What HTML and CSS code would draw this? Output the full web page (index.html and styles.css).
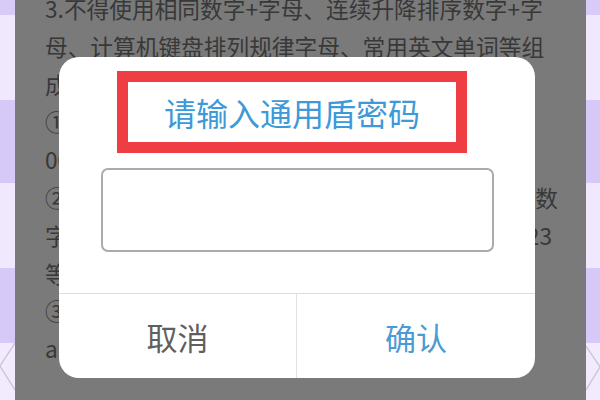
FILE: index.html
```html
<!DOCTYPE html>
<html lang="zh-CN">
<head>
<meta charset="utf-8">
<title>请输入通用盾密码</title>
<link rel="stylesheet" href="styles.css">
</head>
<body>
<div class="screen">
  <div class="stripe stripe-left">
    <svg class="deco" width="15" height="400" viewBox="0 0 15 400"><path d="M15 343 L0 366 L15 390" fill="none" stroke="#c9c1d9" stroke-width="1.3"/></svg>
  </div>
  <div class="main">
    <div class="article">
      <div class="line">3.不得使用相同数字+字母、连续升降排序数字+字</div>
      <div class="line">母、计算机键盘排列规律字母、常用英文单词等组</div>
      <div class="line">成的简单密码：</div>
      <div class="line">①相同数字：</div>
      <div class="line">000000</div>
      <div class="line split"><span>②连续数：</span><span>数</span></div>
      <div class="line split split-23"><span>字：1</span><span>23</span></div>
      <div class="line">等；</div>
      <div class="line">③常用：</div>
      <div class="line">asd</div>
    </div>
    <div class="dialog">
      <div class="dialog-title">请输入通用盾密码</div>
      <div class="dialog-input"></div>
      <div class="dialog-actions">
        <div class="btn btn-cancel">取消</div>
        <div class="btn btn-ok">确认</div>
      </div>
    </div>
  </div>
  <div class="stripe stripe-right">
    <svg class="deco" width="14" height="400" viewBox="0 0 14 400"><path d="M0 346 L14 367 L0 390" fill="none" stroke="#c9c1d9" stroke-width="1.3"/></svg>
  </div>
</div>
</body>
</html>
```
FILE: styles.css
```css
html, body {
  margin: 0;
  padding: 0;
}
body {
  width: 600px;
  height: 400px;
  overflow: hidden;
  font-family: "Noto Sans CJK SC", "Noto Sans", sans-serif;
}
.screen {
  display: grid;
  grid-template-columns: 15px 571px 14px;
  height: 400px;
}
.stripe {
  background: linear-gradient(to bottom,
    #d8cbf8 0, #d8cbf8 15px,
    #f0e9fd 15px, #f0e9fd 100px,
    #d6c8f7 100px, #d6c8f7 183px,
    #f0e9fd 183px, #f0e9fd 268px,
    #d6c8f7 268px, #d6c8f7 343px,
    #f1ebfd 343px, #f1ebfd 400px);
}
.deco {
  display: block;
}
.main {
  position: relative;
  background: #7a7a7a;
  overflow: hidden;
}
.article {
  margin-top: -10px;
  padding-left: 30px;
  width: 513px;
  color: #383838;
  font-size: 22.7px;
  line-height: 37.8px;
}
.line {
  white-space: nowrap;
}
.split {
  display: flex;
  justify-content: space-between;
}
.split-23 {
  padding-right: 6px;
}
.dialog {
  position: absolute;
  left: 44px;
  top: 57px;
  width: 476px;
  height: 321px;
  background: #ffffff;
  border-radius: 20px;
  display: flex;
  flex-direction: column;
  overflow: hidden;
}
.dialog-title {
  box-sizing: border-box;
  margin: 14px 0 0 58px;
  width: 350px;
  height: 82px;
  border: 11px solid #ef3d44;
  display: flex;
  align-items: center;
  justify-content: center;
  color: #3d99d7;
  font-size: 32px;
}
.dialog-input {
  box-sizing: border-box;
  margin: 15px 0 0 42px;
  width: 393px;
  height: 84px;
  border: 2px solid #ababab;
  border-radius: 7px;
}
.dialog-actions {
  margin-top: auto;
  height: 85px;
  box-sizing: border-box;
  border-top: 1px solid #dedede;
  display: grid;
  grid-template-columns: 238px 238px;
}
.btn {
  display: flex;
  align-items: center;
  justify-content: center;
  font-size: 31px;
}
.btn-cancel {
  color: #5f5f5f;
  border-right: 1px solid #e2e2e2;
}
.btn-ok {
  color: #4a9bd5;
}
```
